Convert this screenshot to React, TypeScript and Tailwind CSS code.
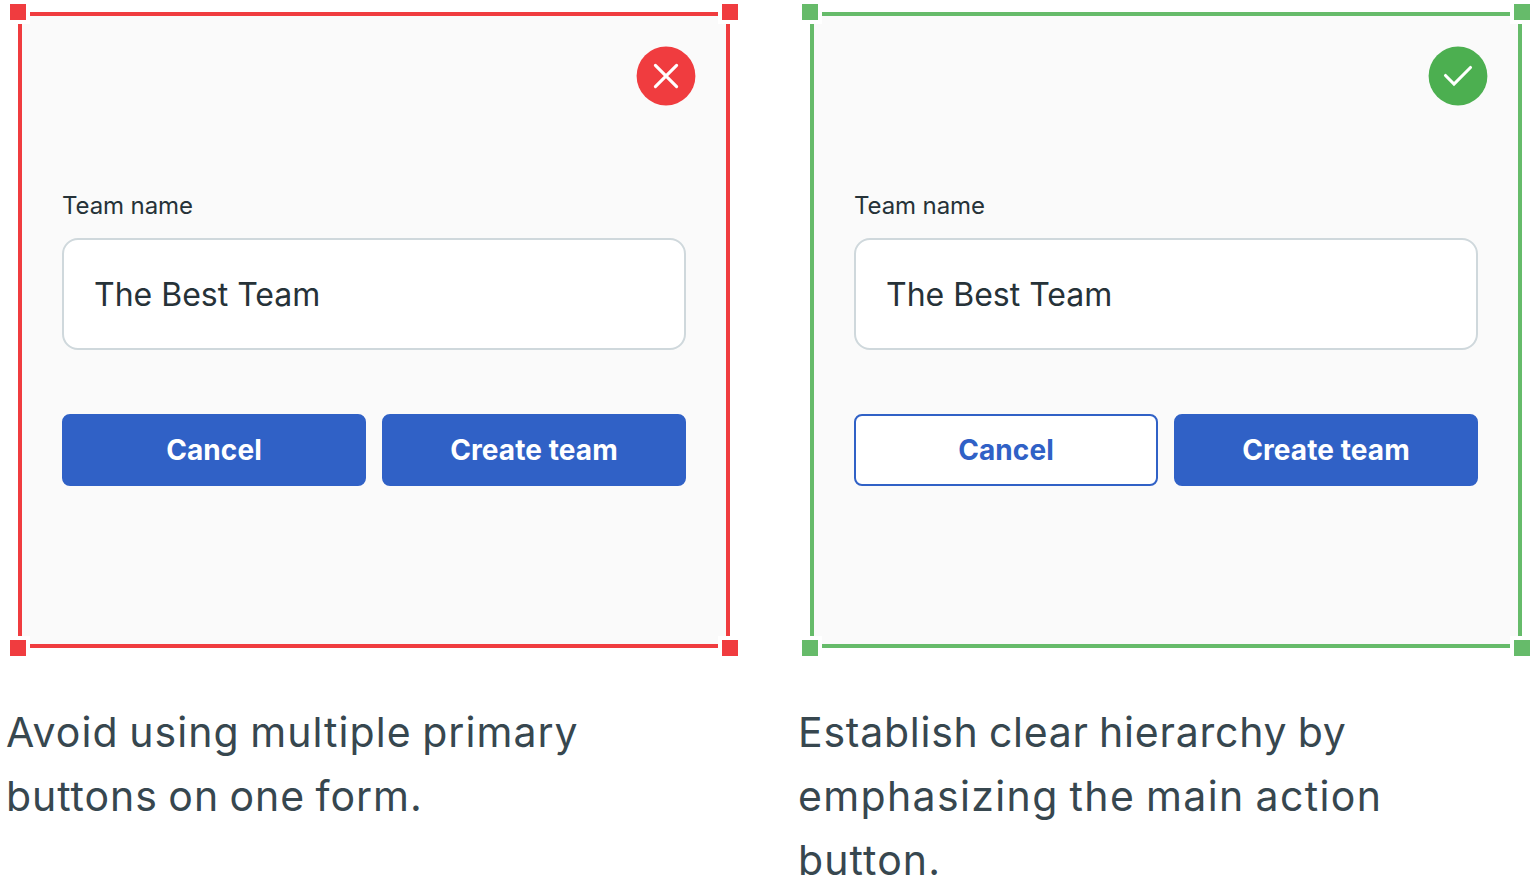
import clsx from "clsx";

type ExampleProps = {
  good: boolean;
  lines: { text: string; className: string }[];
};

const corners = [
  "-left-4 -top-4",
  "-right-4 -top-4",
  "-left-4 -bottom-4",
  "-right-4 -bottom-4",
];

function StatusIcon({ good }: { good: boolean }) {
  return (
    <svg
      className="absolute right-[30px] top-[30px] size-[60px]"
      viewBox="0 0 60 60"
      fill="none"
    >
      <circle cx="30" cy="30" r="29.4" fill={good ? "#4caf50" : "#f03c3f"} />
      <path
        d={
          good
            ? "M17.5 29.5L26 38L42.5 21.5"
            : "M19.4 19.4L40.6 40.6M40.6 19.4L19.4 40.6"
        }
        stroke="white"
        strokeWidth="3.1"
        strokeLinecap="round"
      />
    </svg>
  );
}

function Example({ good, lines }: ExampleProps) {
  return (
    <div className="w-[736px]">
      <div
        className={clsx(
          "relative ml-3 h-[636px] w-[712px] border-4 bg-[#fafafa] px-10 pt-[174px]",
          good ? "border-[#66bb6a]" : "border-[#f03c3f]"
        )}
      >
        {corners.map((corner) => (
          <div
            key={corner}
            className={clsx(
              "absolute size-6 border-4 border-white",
              good ? "bg-[#66bb6a]" : "bg-[#f03c3f]",
              corner
            )}
          />
        ))}
        <StatusIcon good={good} />
        <p className="h-8 text-2xl leading-8 tracking-[-0.1px] text-[#263238]">
          Team name
        </p>
        <div className="mt-4 flex h-28 w-[624px] items-center rounded-2xl border-2 border-[#cfd8dc] bg-white px-[30px] pt-0.5 text-[32px] text-[#263238]">
          The Best Team
        </div>
        <div className="mt-16 flex w-[624px] gap-4 text-[28px] font-bold tracking-[0.08px]">
          <button
            className={clsx(
              "h-[72px] flex-1 rounded-lg border-2 border-[#3061c6]",
              good ? "bg-white text-[#3061c6]" : "bg-[#3061c6] text-white"
            )}
          >
            Cancel
          </button>
          <button className="h-[72px] flex-1 rounded-lg border-2 border-[#3061c6] bg-[#3061c6] text-white">
            Create team
          </button>
        </div>
      </div>
      <p className="mt-[52px] whitespace-nowrap text-[41px] leading-[64px] text-[#37474f]">
        {lines.map((line) => (
          <span key={line.text} className={clsx("block", line.className)}>
            {line.text}
          </span>
        ))}
      </p>
    </div>
  );
}

export default function App() {
  return (
    <main className="flex h-[892px] w-[1540px] gap-14 overflow-hidden bg-white pl-1.5 pt-3 font-['Inter',sans-serif]">
      <Example
        good={false}
        lines={[
          {
            text: "Avoid using multiple primary",
            className: "tracking-[1.05px] [word-spacing:-2px]",
          },
          {
            text: "buttons on one form.",
            className: "tracking-[0.95px] [word-spacing:-2px]",
          },
        ]}
      />
      <Example
        good
        lines={[
          {
            text: "Establish clear hierarchy by",
            className: "tracking-[0.76px] [word-spacing:-2px]",
          },
          {
            text: "emphasizing the main action",
            className: "tracking-[1.36px] [word-spacing:-2px]",
          },
          { text: "button.", className: "tracking-[1.1px]" },
        ]}
      />
    </main>
  );
}
